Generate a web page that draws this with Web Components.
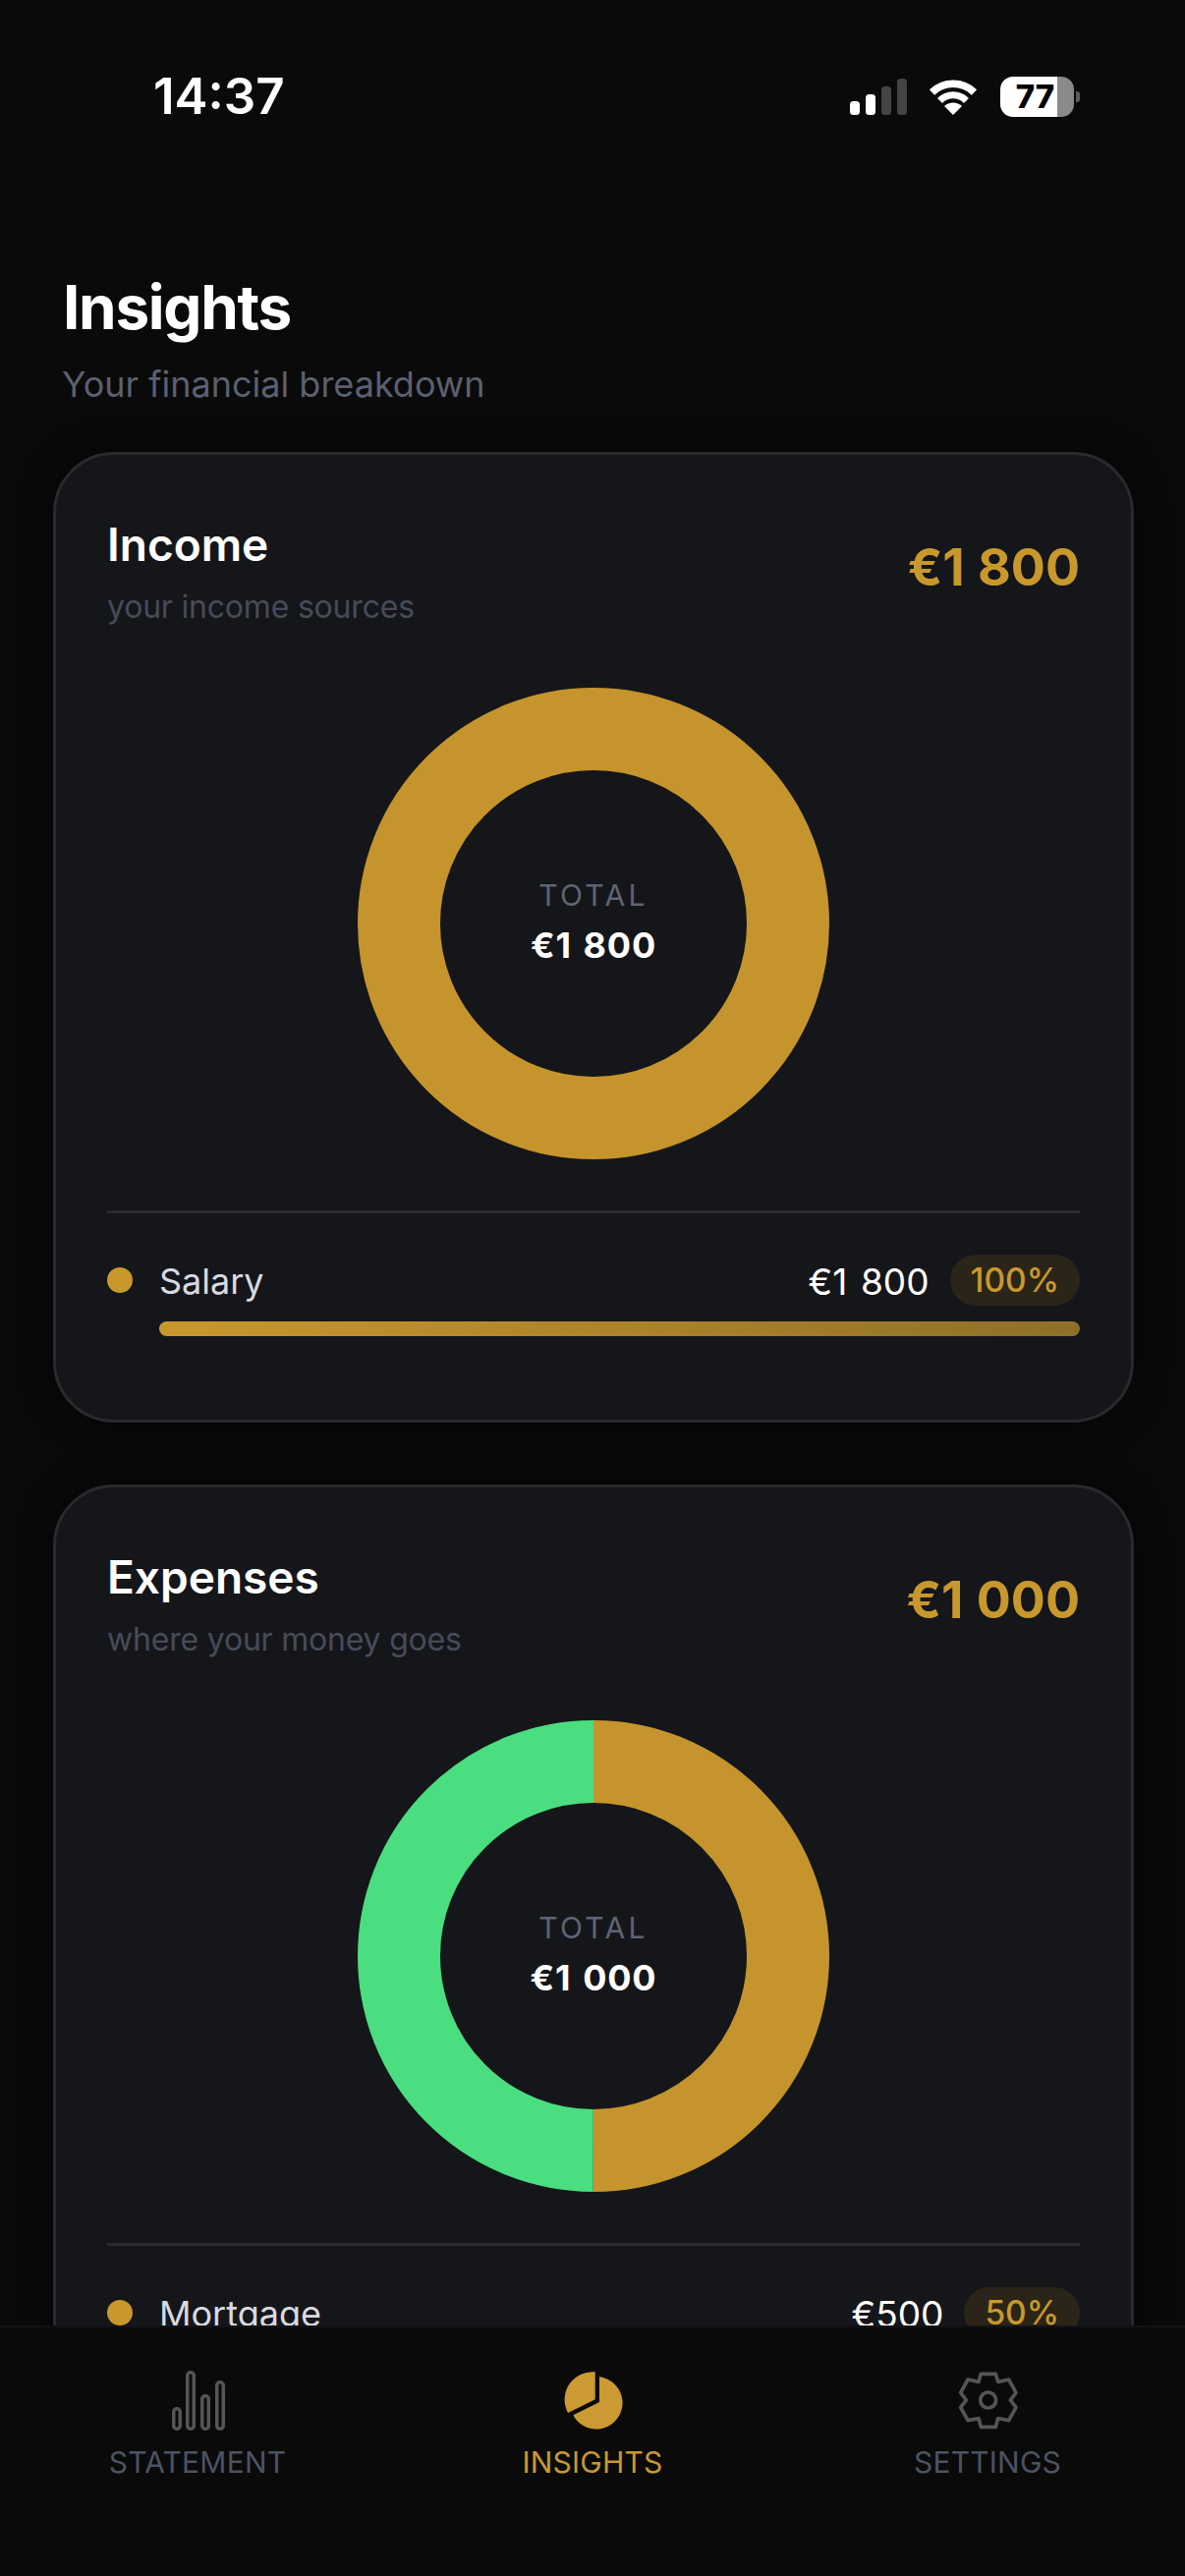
<!DOCTYPE html>
<html lang="en">
<head>
<meta charset="utf-8">
<title>Insights</title>
<style>
  html, body { margin: 0; padding: 0; background: #0a0a0a; }
  body { font-family: Inter, "Liberation Sans", sans-serif; color: #fff; }
</style>
</head>
<body>
<app-shell>
  <status-bar time="14:37" level="77"></status-bar>
  <page-head heading="Insights" sub="Your financial breakdown"></page-head>
  <fin-card heading="Income" sub="your income sources" amount="€1 800">
    <ring-chart slot="chart" total="€1 800" segments="#c5942d"></ring-chart>
    <legend-row name="Salary" value="€1 800" pct="100%" fill="100"></legend-row>
  </fin-card>
  <fin-card heading="Expenses" sub="where your money goes" amount="€1 000">
    <ring-chart slot="chart" total="€1 000" segments="#c5942d,#4ade80"></ring-chart>
    <legend-row name="Mortgage" value="€500" pct="50%" fill="50"></legend-row>
  </fin-card>
  <tab-bar slot="nav">
    <tab-item label="STATEMENT">
      <svg width="66" height="66" viewBox="0 0 66 66" fill="none" stroke="#555" stroke-width="3.5">
        <rect x="8.75" y="41.75" width="6.5" height="20.5" rx="3"/>
        <rect x="22.75" y="4.75" width="6.5" height="57.5" rx="3"/>
        <rect x="37.75" y="28.75" width="6.5" height="33.5" rx="3"/>
        <rect x="52.75" y="14.75" width="6.5" height="47.5" rx="3"/>
      </svg>
    </tab-item>
    <tab-item label="INSIGHTS" active>
      <svg width="66" height="66" viewBox="30 30 198 198" fill="#cb9a32">
        <path d="M137 43V127L54 168A85 85 0 0 1 137 43Z"/>
        <path d="M150 58V135L70 175A80 80 0 1 0 150 58Z"/>
      </svg>
    </tab-item>
    <tab-item label="SETTINGS">
      <svg width="66" height="66" viewBox="21 29 198 198" fill="none" stroke="#555" stroke-width="11" stroke-linejoin="round">
        <path d="M100 48H145L152 72L185 65L207 105L190 128L207 150L185 190L152 184L145 210H100L93 184L60 190L38 150L55 128L38 105L60 65L93 72Z"/>
        <circle cx="122" cy="128" r="24"/>
      </svg>
    </tab-item>
  </tab-bar>
</app-shell>

<script>
class AppShell extends HTMLElement {
  constructor() {
    super();
    this.attachShadow({ mode: "open" }).innerHTML = `
      <style>
        :host { display: flex; flex-direction: column; height: 100vh; overflow: hidden; background: #0a0a0a; }
        .scroll { flex: 1; min-height: 0; overflow: hidden; }
      </style>
      <div class="scroll"><slot></slot></div>
      <slot name="nav"></slot>`;
  }
}

class StatusBar extends HTMLElement {
  constructor() {
    super();
    const level = this.getAttribute("level");
    this.attachShadow({ mode: "open" }).innerHTML = `
      <style>
        :host { display: flex; align-items: center; justify-content: space-between; height: 60px; padding: 68px 107px 147px 156px; }
        .time { font-size: 51px; font-weight: 600; line-height: 60px; color: #fff; }
        .icons { display: flex; align-items: center; }
        .signal { display: block; margin-right: 22px; }
        .wifi { display: block; margin-right: 23px; }
        .battery { width: 75px; height: 41px; border-radius: 13px; background: linear-gradient(90deg, #fff 58px, #8a8a8a 58px);
          color: #000; font-size: 33px; font-weight: 800; line-height: 41px; text-align: center; box-sizing: border-box; padding-right: 4px; }
        .nub { width: 4px; height: 11px; margin-left: 2px; border-radius: 0 3px 3px 0; background: #5c5c5c; }
      </style>
      <span class="time">${this.getAttribute("time")}</span>
      <div class="icons">
        <svg class="signal" width="58" height="37" viewBox="0 0 58 37">
          <rect x="0" y="23" width="10" height="14" rx="3.5" fill="#fff"/>
          <rect x="16" y="16" width="10" height="21" rx="3.5" fill="#fff"/>
          <rect x="32" y="8" width="10" height="29" rx="3.5" fill="#444"/>
          <rect x="48" y="0" width="10" height="37" rx="3.5" fill="#444"/>
        </svg>
        <svg class="wifi" width="50" height="37" viewBox="0 0 50 37" fill="none" stroke="#fff">
          <path d="M3.5 14A31 31 0 0 1 46.5 14" stroke-width="7.5"/>
          <path d="M11.5 22.5A19 19 0 0 1 38.5 22.5" stroke-width="7"/>
          <path d="M25 37L16 28A13 13 0 0 1 34 28Z" fill="#fff" stroke="none"/>
        </svg>
        <div class="battery">${level}</div>
        <div class="nub"></div>
      </div>`;
  }
}

class PageHead extends HTMLElement {
  constructor() {
    super();
    this.attachShadow({ mode: "open" }).innerHTML = `
      <style>
        :host { display: block; padding: 0 64px 46px; }
        h1 { margin: 0 0 17px; font-size: 62px; font-weight: 700; line-height: 76px; letter-spacing: -1.3px; color: #fff; }
        p { margin: 0 0 0 -1px; font-size: 36px; line-height: 46px; color: #5b6070; }
      </style>
      <h1>${this.getAttribute("heading")}</h1>
      <p>${this.getAttribute("sub")}</p>`;
  }
}

class FinCard extends HTMLElement {
  constructor() {
    super();
    this.attachShadow({ mode: "open" }).innerHTML = `
      <style>
        :host { display: block; box-sizing: border-box; width: 1100px; margin: 0 52px 63px 54px; padding: 64px 52px 64px;
          background: #15161a; border: 3px solid #292a2e; border-radius: 62px; box-shadow: 0 0 36px rgba(0,0,0,.7); }
        header { display: flex; justify-content: space-between; align-items: center; }
        h2 { margin: 0 0 17px; font-size: 46px; font-weight: 600; line-height: 54px; color: #fff; }
        p { margin: 0; font-size: 32px; line-height: 40px; letter-spacing: -.2px; color: #474b59; }
        .amount { margin-top: -11px; font-size: 52px; font-weight: 700; color: #c9982d; word-spacing: .02em; }
        .chart { display: flex; justify-content: center; margin: 62px 0 52px; }
        hr { height: 3px; margin: 0 0 42px; border: 0; background: #2a2b30; }
      </style>
      <header>
        <div><h2>${this.getAttribute("heading")}</h2><p>${this.getAttribute("sub")}</p></div>
        <div class="amount">${this.getAttribute("amount")}</div>
      </header>
      <div class="chart"><slot name="chart"></slot></div>
      <hr>
      <slot></slot>`;
  }
}

class RingChart extends HTMLElement {
  constructor() {
    super();
    const colors = this.getAttribute("segments").split(",");
    const r = 198;
    const len = 2 * Math.PI * r;
    const part = len / colors.length;
    const arcs = colors.map((c, i) =>
      `<circle cx="240" cy="240" r="${r}" fill="none" stroke="${c}" stroke-width="84"
        stroke-dasharray="${part} ${len - part}" stroke-dashoffset="${-part * i}" transform="rotate(-90 240 240)"/>`).join("");
    this.attachShadow({ mode: "open" }).innerHTML = `
      <style>
        :host { display: grid; width: 480px; height: 480px; }
        svg, .mid { grid-area: 1 / 1; }
        svg { display: block; }
        .mid { display: flex; flex-direction: column; align-items: center; justify-content: center; padding-bottom: 3px; }
        .label { font-size: 30px; line-height: 36px; letter-spacing: 3.3px; color: #5f6473; }
        .total { margin-top: 11px; font-size: 36px; line-height: 44px; font-weight: 700; letter-spacing: .8px; color: #fff; word-spacing: .07em; }
      </style>
      <svg width="480" height="480" viewBox="0 0 480 480">${arcs}</svg>
      <div class="mid"><span class="label">TOTAL</span><span class="total">${this.getAttribute("total")}</span></div>`;
  }
}

class LegendRow extends HTMLElement {
  constructor() {
    super();
    this.attachShadow({ mode: "open" }).innerHTML = `
      <style>
        :host { display: block; margin-bottom: 21px; }
        .row { display: flex; align-items: center; height: 52px; }
        .dot { width: 26px; height: 26px; margin-right: 27px; border-radius: 50%; background: #c9982d; }
        .name { flex: 1; padding-top: 2px; font-size: 36px; color: #d8dae0; }
        .value { margin-right: 21px; padding-top: 2px; font-size: 37px; color: #fff; word-spacing: .09em; }
        .pct { padding: 0 21px; font-size: 33.5px; line-height: 52px; font-weight: 500; color: #c9982d; background: #2a2518; border-radius: 26px; }
        .track { height: 15px; margin: 16px 0 0 53px; border-radius: 8px; }
        .fill { height: 100%; border-radius: 8px; background: linear-gradient(90deg, #c9982d, #8f6f28); }
      </style>
      <div class="row">
        <span class="dot"></span>
        <span class="name">${this.getAttribute("name")}</span>
        <span class="value">${this.getAttribute("value")}</span>
        <span class="pct">${this.getAttribute("pct")}</span>
      </div>
      <div class="track"><div class="fill" style="width:${this.getAttribute("fill")}%"></div></div>`;
  }
}

class TabBar extends HTMLElement {
  constructor() {
    super();
    this.attachShadow({ mode: "open" }).innerHTML = `
      <style>
        :host { display: flex; flex: none; box-sizing: border-box; height: 255px; padding-top: 41px; background: #0a0a0a; border-top: 2px solid #121318; }
      </style>
      <slot></slot>`;
  }
}

class TabItem extends HTMLElement {
  constructor() {
    super();
    this.attachShadow({ mode: "open" }).innerHTML = `
      <style>
        :host { display: flex; flex: 1; flex-direction: column; align-items: center; }
        .icon { height: 66px; }
        ::slotted(svg) { display: block; }
        .label { margin-top: 15px; font-size: 30px; line-height: 30px; letter-spacing: .2px; color: #4b5363; }
        :host([active]) .label { color: #c9982d; }
      </style>
      <div class="icon"><slot></slot></div>
      <span class="label">${this.getAttribute("label")}</span>`;
  }
}

customElements.define("app-shell", AppShell);
customElements.define("status-bar", StatusBar);
customElements.define("page-head", PageHead);
customElements.define("fin-card", FinCard);
customElements.define("ring-chart", RingChart);
customElements.define("legend-row", LegendRow);
customElements.define("tab-bar", TabBar);
customElements.define("tab-item", TabItem);
</script>
</body>
</html>
